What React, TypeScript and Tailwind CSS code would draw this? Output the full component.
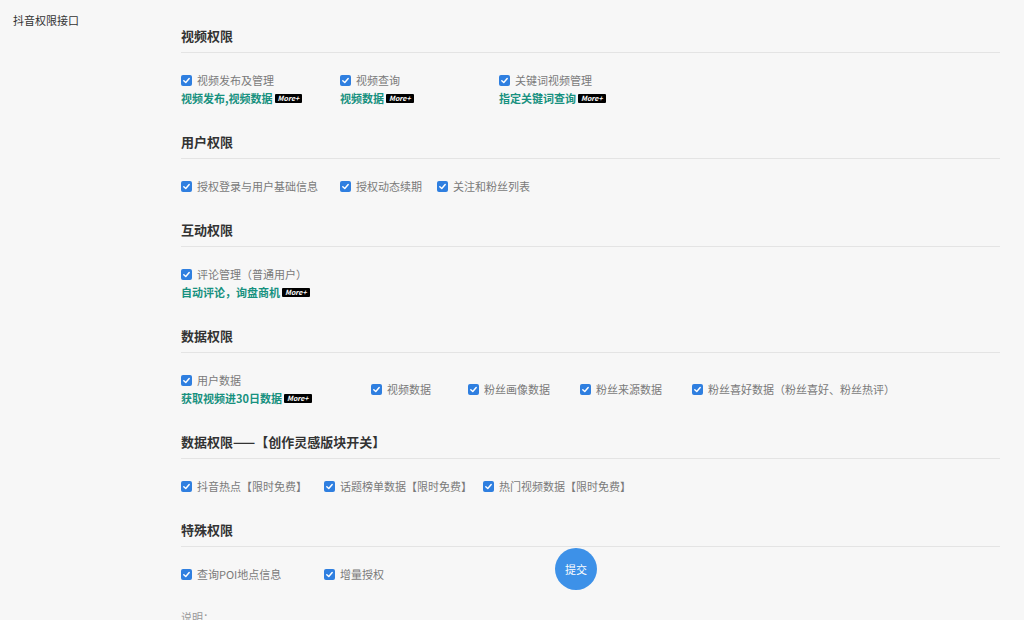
type Item = { label: string; w: number; sub?: string };

type Section = { title: string; items: Item[] };

const sections: Section[] = [
  {
    title: "视频权限",
    items: [
      { label: "视频发布及管理", w: 159, sub: "视频发布,视频数据" },
      { label: "视频查询", w: 159, sub: "视频数据" },
      { label: "关键词视频管理", w: 159, sub: "指定关键词查询" },
    ],
  },
  {
    title: "用户权限",
    items: [
      { label: "授权登录与用户基础信息", w: 159 },
      { label: "授权动态续期", w: 97 },
      { label: "关注和粉丝列表", w: 120 },
    ],
  },
  {
    title: "互动权限",
    items: [{ label: "评论管理（普通用户）", w: 190, sub: "自动评论，询盘商机" }],
  },
  {
    title: "数据权限",
    items: [
      { label: "用户数据", w: 190, sub: "获取视频进30日数据" },
      { label: "视频数据", w: 97 },
      { label: "粉丝画像数据", w: 112 },
      { label: "粉丝来源数据", w: 112 },
      { label: "粉丝喜好数据（粉丝喜好、粉丝热评）", w: 220 },
    ],
  },
  {
    title: "数据权限——【创作灵感版块开关】",
    items: [
      { label: "抖音热点【限时免费】", w: 143 },
      { label: "话题榜单数据【限时免费】", w: 159 },
      { label: "热门视频数据【限时免费】", w: 160 },
    ],
  },
  {
    title: "特殊权限",
    items: [
      { label: "查询POI地点信息", w: 143 },
      { label: "增量授权", w: 100 },
    ],
  },
];

function Check() {
  return (
    <span className="flex h-[11px] w-[11px] shrink-0 items-center justify-center rounded-[2px] bg-[#2f7fe0]">
      <svg viewBox="0 0 10 10" className="h-[9px] w-[9px]">
        <path d="M2 5.2 L4.2 7.3 L8 2.8" fill="none" stroke="#fff" strokeWidth="1.6" strokeLinecap="round" strokeLinejoin="round" />
      </svg>
    </span>
  );
}

function More() {
  return (
    <span className="ml-[2px] inline-flex h-[9px] items-center rounded-[1px] bg-black px-[3px] text-[7px] font-bold italic leading-none text-white">
      More+
    </span>
  );
}

export default function App() {
  return (
    <div
      className="relative h-[620px] w-full overflow-hidden bg-[#f7f7f7]"
      style={{ fontFamily: '"Noto Sans CJK SC", "Noto Sans", sans-serif' }}
    >
      <div className="flex">
        <div className="w-[181px] shrink-0 pl-[13px] pt-[11px] text-[11px] leading-[18px] text-[#333]">
          抖音权限接口
        </div>
        <div className="w-[819px] pt-[26px]">
          {sections.map((s) => (
            <div key={s.title} className="mb-[25px]">
              <h2 className="border-b border-[#e4e4e4] pb-[6px] text-[13px] font-bold leading-[20px] text-[#333]">
                {s.title}
              </h2>
              <div className="mt-[18px] flex items-center">
                {s.items.map((it) => (
                  <div key={it.label} className="shrink-0" style={{ width: it.w }}>
                    <div className="flex h-[18px] items-center gap-[5px] text-[11px] leading-[18px] text-[#7a7a7a]">
                      <Check />
                      <span className="whitespace-nowrap">{it.label}</span>
                    </div>
                    {it.sub && (
                      <div className="flex h-[18px] items-center whitespace-nowrap text-[11px] font-bold leading-[18px] text-[#17917f]">
                        {it.sub}
                        <More />
                      </div>
                    )}
                  </div>
                ))}
              </div>
            </div>
          ))}
          <div className="text-[11px] leading-[18px] text-[#999]">说明：</div>
        </div>
      </div>
      <button className="absolute left-[555px] top-[548px] flex h-[42px] w-[42px] items-center justify-center rounded-full bg-[#3d91e8] text-[11px] text-white">
        提交
      </button>
    </div>
  );
}
